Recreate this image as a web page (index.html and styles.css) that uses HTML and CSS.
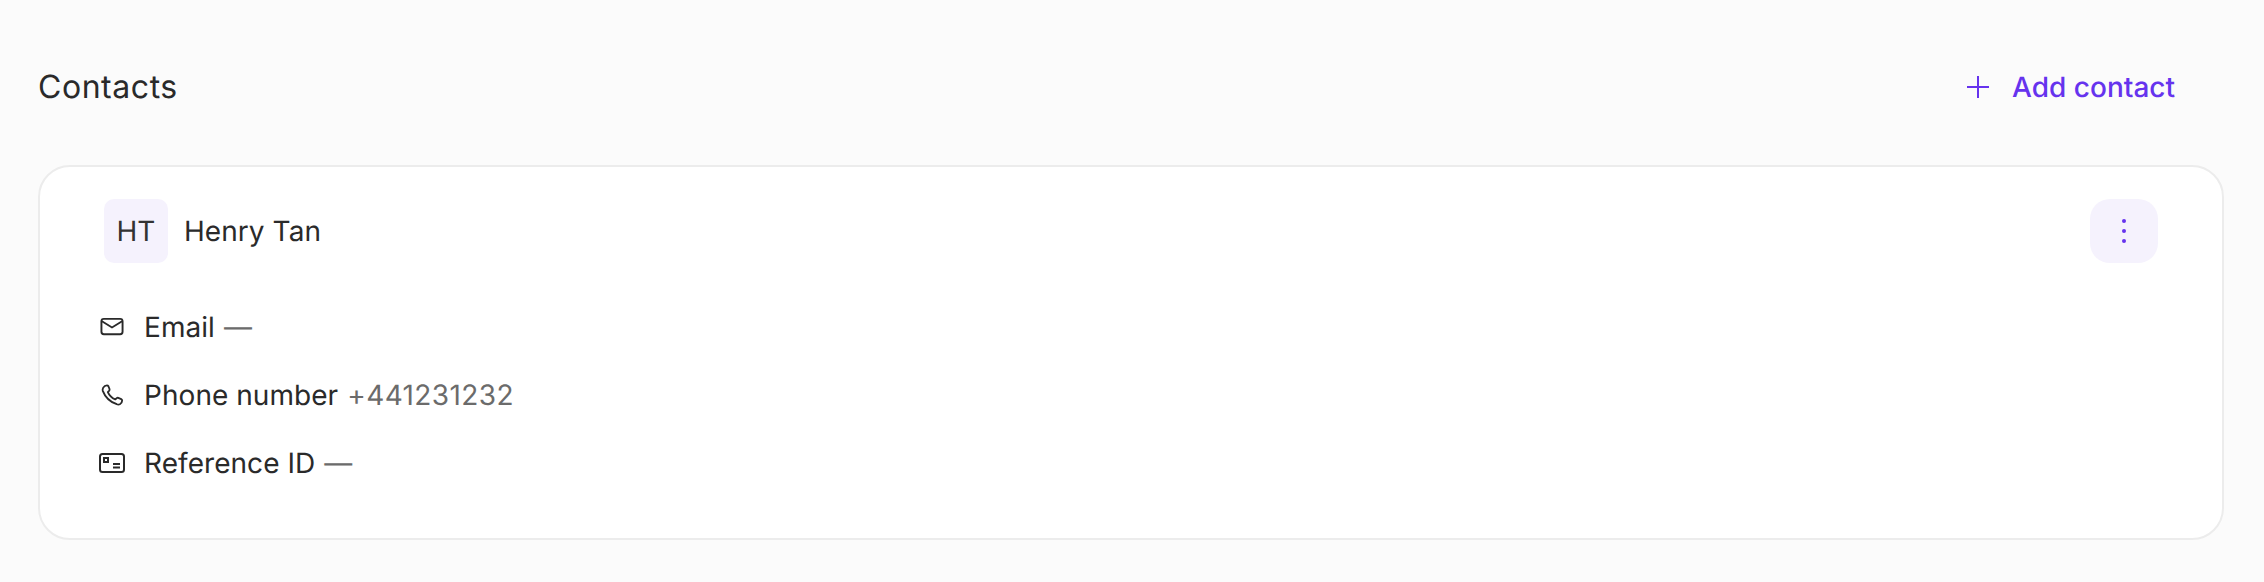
FILE: index.html
```html
<!DOCTYPE html>
<html lang="en">
<head>
<meta charset="utf-8">
<title>Contacts</title>
<link rel="stylesheet" href="styles.css">
</head>
<body>
<main class="page">
  <header class="head">
    <h2 class="title">Contacts</h2>
    <button class="add" type="button">
      <svg class="add-icon" viewBox="0 0 24 24" fill="none" stroke="currentColor" stroke-width="2"><path d="M12 1v22M1 12h22"/></svg>
      <span>Add contact</span>
    </button>
  </header>
  <section class="card">
    <div class="card-top">
      <div class="person">
        <div class="avatar">HT</div>
        <div class="name">Henry Tan</div>
      </div>
      <button class="menu" type="button" aria-label="More">
        <svg viewBox="0 0 4 24" width="4" height="24" fill="currentColor"><circle cx="2" cy="2" r="2"/><circle cx="2" cy="12" r="2"/><circle cx="2" cy="22" r="2"/></svg>
      </button>
    </div>
    <ul class="rows">
      <li class="row">
        <svg class="icon" viewBox="-0.500 0 25 24" fill="none" stroke="currentColor" stroke-width="2"><rect x="1" y="3.500" width="22" height="16" rx="2.500"/><path d="M1.500 6l10.500 6.500L22.500 6"/></svg>
        <span class="label">Email</span><span class="value">—</span>
      </li>
      <li class="row">
        <svg class="icon" viewBox="-1 -1 26 26" fill="none" stroke="currentColor" stroke-width="2" stroke-linejoin="round"><path d="M2.500 4C3.500 2.300 5 1.500 6.500 1.500c.8 0 1.300.4 1.600 1l1.200 3c.2.600.1 1.200-.3 1.700L7.500 8.800c1.600 3.600 4.400 6.400 8 8l1.600-1.400c.5-.4 1.100-.5 1.700-.3l3.200 1.300c.6.300 1 .8 1 1.600 0 1.500-.8 3-2.500 4-1 .5-2.200.5-3.400 0C10 19.500 4.500 14 2 7.500c-.3-1.200-.1-2.500.5-3.500z"/></svg>
        <span class="label">Phone number</span><span class="value">+441231232</span>
      </li>
      <li class="row">
        <svg class="icon icon-wide" viewBox="0 0 26 24" fill="none" stroke="currentColor" stroke-width="2"><rect x="1" y="3" width="24" height="18" rx="2.500"/><rect x="5" y="7" width="4" height="4"/><path d="M14 13h7M14 16.500h7"/></svg>
        <span class="label">Reference ID</span><span class="value">—</span>
      </li>
    </ul>
  </section>
</main>
</body>
</html>
```
FILE: styles.css
```css
* { box-sizing: border-box; }
html, body { margin: 0; }
body {
  background: #fbfbfb;
  color: #2a2a2a;
  font-family: Inter, "Liberation Sans", sans-serif;
  text-rendering: geometricPrecision;
}
.page { padding: 57px 40px 41px 38px; }
.head {
  display: flex;
  align-items: center;
  justify-content: space-between;
  height: 60px;
  margin-bottom: 48px;
}
.title { margin: 0; font-size: 32px; font-weight: 400; line-height: 60px; letter-spacing: 0.55px; }
.add {
  display: flex;
  align-items: center;
  gap: 22px;
  padding: 0 49px 0 0;
  border: 0;
  background: none;
  color: #6633ee;
  font: 500 28px Inter, sans-serif;
  text-rendering: geometricPrecision;
}
.add-icon { width: 24px; height: 24px; }
.card {
  background: #fff;
  border: 2px solid #ececec;
  border-radius: 32px;
  height: 375px;
  padding: 32px 64px 0 64px;
}
.card-top { display: flex; align-items: center; justify-content: space-between; }
.person { display: flex; align-items: center; gap: 16px; }
.avatar {
  width: 64px; height: 64px;
  display: flex; align-items: center; justify-content: center;
  background: #f5f2fd;
  border-radius: 10px;
  font-size: 28px;
  color: #333;
}
.name { font-size: 28px; letter-spacing: 0.05px; }
.menu {
  width: 68px; height: 64px;
  display: flex; align-items: center; justify-content: center;
  padding: 0; border: 0;
  background: #f5f2fd;
  border-radius: 20px;
  color: #6633ee;
}
.rows { list-style: none; margin: 44px 0 0; padding: 0; display: flex; flex-direction: column; gap: 28px; }
.row { display: flex; align-items: center; height: 40px; font-size: 28px; letter-spacing: 0.05px; }
.icon { width: 24px; height: 24px; flex: none; margin-right: 20px; margin-left: -4px; }
.icon-wide { width: 26px; margin-left: -5px; margin-right: 19px; }
.label { margin-right: 9px; }
.value { color: #6b6b6b; letter-spacing: 0.4px; }
```
